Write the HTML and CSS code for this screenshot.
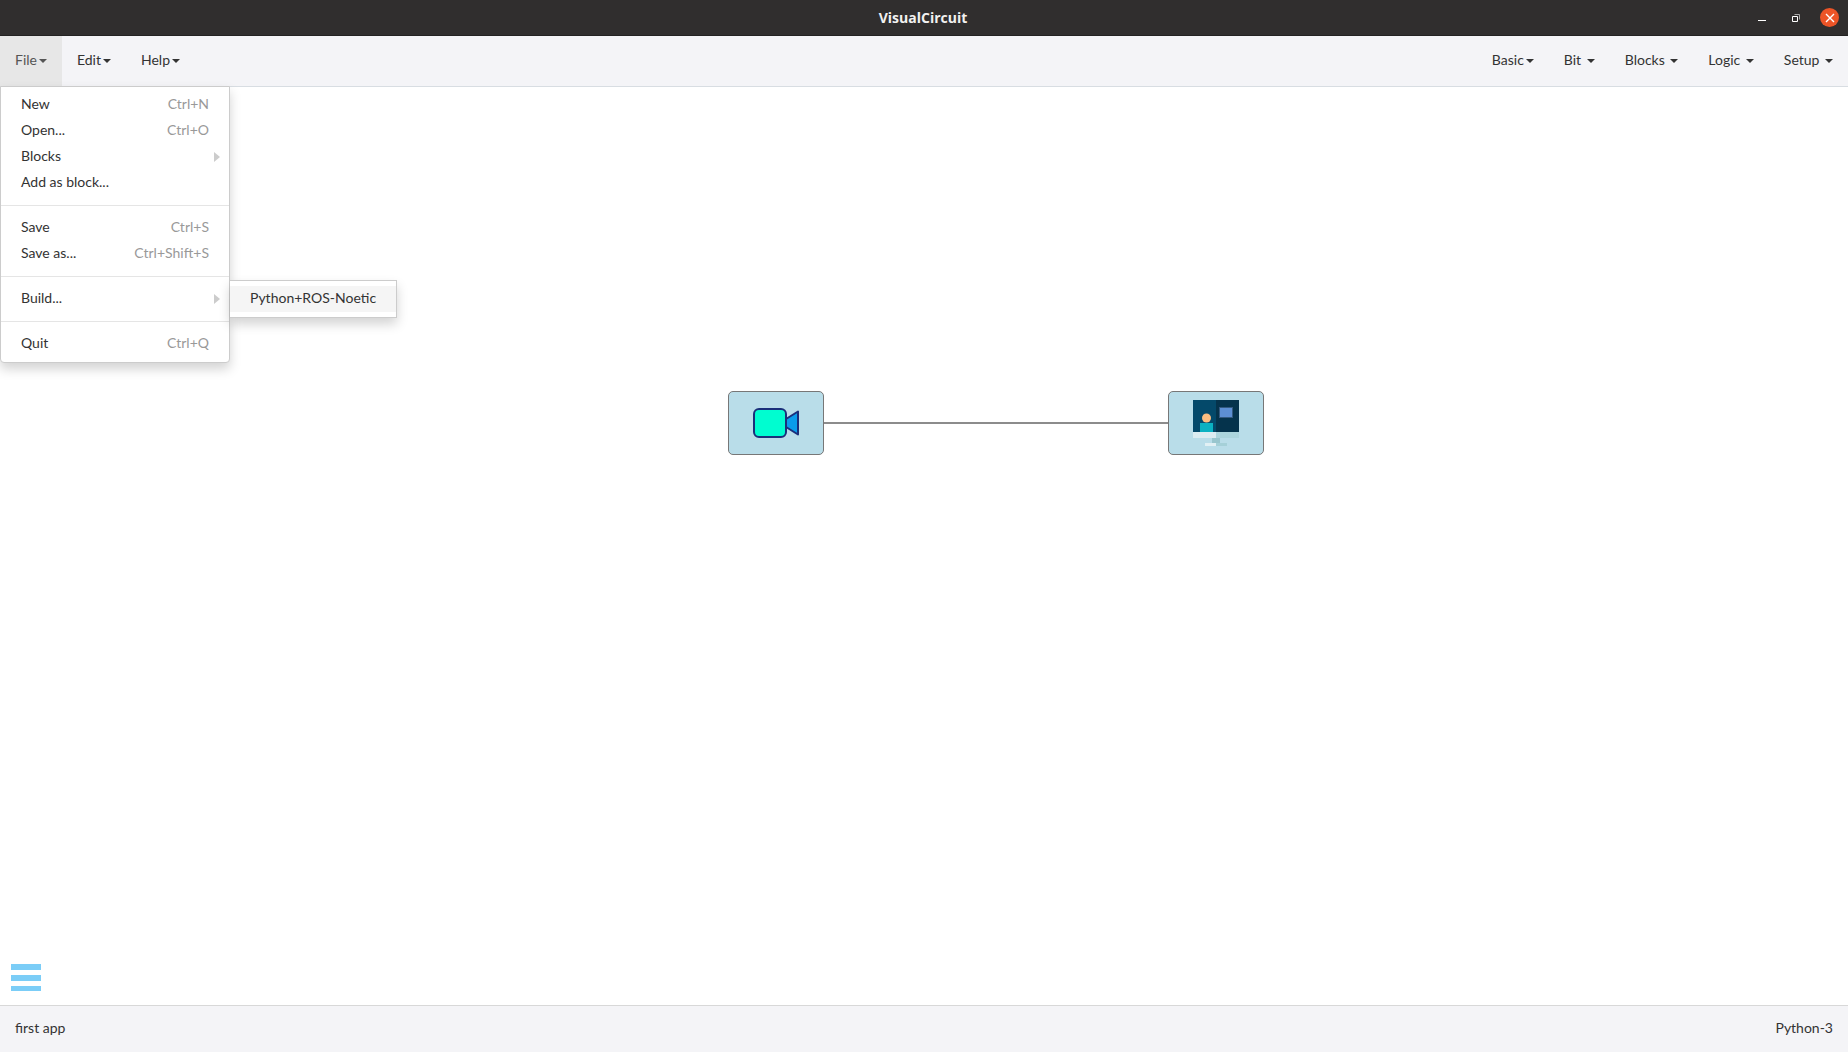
FILE: index.html

```html
<!DOCTYPE html>
<html lang="en">
<head>
  <meta charset="UTF-8" />
  <title>VisualCircuit</title>
  <link rel="stylesheet" href="styles.css">
</head>
<body>
  <header class="titlebar">
    <span class="app-title">VisualCircuit</span>
    <div class="win-buttons">
      <svg class="win-icon" width="10" height="10" viewBox="0 0 10 10"><path d="M1 7.500h8" stroke="#fff" stroke-width="1"/></svg>
      <svg class="win-icon" width="10" height="10" viewBox="0 0 10 10"><path d="M1.500 3.500h5v5h-5z" fill="none" stroke="#fff"/><path d="M3.500 1.500h5v5" fill="none" stroke="#aaa"/></svg>
      <span class="win-close">
        <svg width="10" height="10" viewBox="0 0 10 10"><path d="M1 1l8 8M9 1l-8 8" stroke="#fff" stroke-width="1.400"/></svg>
      </span>
    </div>
  </header>

  <nav class="menubar">
    <div class="menu-left">
      <a class="menu-btn active">File<span class="caret"></span></a>
      <a class="menu-btn">Edit<span class="caret"></span></a>
      <a class="menu-btn">Help<span class="caret"></span></a>
    </div>
    <div class="menu-right">
      <a class="menu-btn">Basic<span class="caret"></span></a>
      <a class="menu-btn">Bit <span class="caret"></span></a>
      <a class="menu-btn">Blocks <span class="caret"></span></a>
      <a class="menu-btn">Logic <span class="caret"></span></a>
      <a class="menu-btn">Setup <span class="caret"></span></a>
    </div>
  </nav>

  <ul class="dropdown">
    <li class="item"><span>New</span><span class="keys">Ctrl+N</span></li>
    <li class="item"><span>Open...</span><span class="keys">Ctrl+O</span></li>
    <li class="item sub"><span>Blocks</span></li>
    <li class="item"><span>Add as block...</span></li>
    <li class="divider"></li>
    <li class="item"><span>Save</span><span class="keys">Ctrl+S</span></li>
    <li class="item"><span>Save as...</span><span class="keys">Ctrl+Shift+S</span></li>
    <li class="divider"></li>
    <li class="item sub"><span>Build...</span></li>
    <li class="divider"></li>
    <li class="item"><span>Quit</span><span class="keys">Ctrl+Q</span></li>
  </ul>
  <ul class="submenu">
    <li class="item hover"><span>Python+ROS-Noetic</span></li>
  </ul>

  <main class="canvas">
    <div class="wire"></div>
    <div class="node node-camera">
      <svg width="46" height="30" viewBox="0 0 46 30">
        <path d="M33 11L45 3.500v23L33 19z" fill="#0a9ceb" stroke="#1b2f7a" stroke-width="2" stroke-linejoin="round"/>
        <rect x="1" y="1" width="32" height="28" rx="5" fill="#00fdd0" stroke="#1b2f7a" stroke-width="2"/>
      </svg>
    </div>
    <div class="node node-screen">
      <svg width="46" height="46" viewBox="0 0 46 46">
        <rect x="0" y="0" width="23" height="32" fill="#04496a"/>
        <rect x="23" y="0" width="23" height="32" fill="#05334c"/>
        <rect x="26.500" y="7.500" width="13" height="10" fill="#5d8fd3" stroke="#33597f"/>
        <circle cx="13.500" cy="18" r="4.500" fill="#fbbd80"/>
        <rect x="7" y="23" width="13" height="9" fill="#0bb1c1"/>
        <rect x="0" y="32" width="23" height="6" fill="#dbecf1"/>
        <rect x="23" y="32" width="23" height="6" fill="#acd5dd"/>
        <rect x="19" y="38" width="8" height="5" fill="#99c6ce"/>
        <rect x="12" y="43" width="11" height="3" fill="#e2f0f4"/>
        <rect x="23" y="43" width="11" height="3" fill="#a5d0d8"/>
      </svg>
    </div>
    <div class="burger">
      <span></span><span></span><span></span>
    </div>
  </main>

  <footer class="statusbar">
    <span>first app</span>
    <span>Python-3</span>
  </footer>
</body>
</html>
```

FILE: styles.css

```css
* { box-sizing: border-box; }
html, body { height: 100%; }
body {
  margin: 0;
  display: flex;
  flex-direction: column;
  overflow: hidden;
  font-family: Lato, sans-serif;
  font-size: 14px;
  color: #333;
  background: #fff;
}

.titlebar {
  height: 36px;
  flex: none;
  position: relative;
  display: flex;
  align-items: center;
  justify-content: center;
  background: #302e2e;
  border-bottom: 1px solid #232222;
}
.app-title {
  font-family: "Open Sans", sans-serif;
  font-weight: 700;
  font-size: 14px;
  color: #f2f1f0;
  margin-right: 2px;
}
.win-buttons {
  position: absolute;
  right: 9px;
  top: 8px;
  display: flex;
  align-items: center;
  gap: 24px;
}
.win-close {
  width: 19px;
  height: 19px;
  margin-left: -5px;
  border-radius: 50%;
  background: #ec5427;
  display: flex;
  align-items: center;
  justify-content: center;
}

.menubar {
  height: 51px;
  flex: none;
  display: flex;
  justify-content: space-between;
  background: #f4f4f7;
  border-bottom: 1px solid #d8dde2;
}
.menu-left, .menu-right { display: flex; }
.menu-btn {
  display: flex;
  align-items: center;
  padding: 0 15px 3px;
  white-space: pre;
  color: #333;
}
.menu-btn.active {
  background: #e7e7e7;
  color: #555;
}
.caret {
  display: inline-block;
  width: 0;
  height: 0;
  margin: 2px 0 0 2px;
  border-top: 4px solid #333;
  border-left: 4px solid transparent;
  border-right: 4px solid transparent;
}
.menu-btn.active .caret { border-top-color: #555; }

.dropdown, .submenu {
  position: absolute;
  margin: 0;
  list-style: none;
  background: #fff;
  border: 1px solid #ccc;
  box-shadow: 0 6px 12px rgba(0,0,0,0.175);
  z-index: 10;
}
.dropdown {
  left: 0;
  top: 86px;
  width: 230px;
  padding: 5px 0;
  border-radius: 0 0 4px 4px;
}
.submenu {
  left: 230px;
  top: 280px;
  width: 167px;
  padding: 5px 0;
  border-left: none;
}
.item {
  height: 26px;
  padding: 0 20px 4px;
  display: flex;
  align-items: center;
  justify-content: space-between;
  position: relative;
  white-space: nowrap;
}
.item.hover { background: #f5f5f5; padding: 0 0 3px 20px; }
.keys { color: #999; }
.sub::after {
  content: "";
  position: absolute;
  right: 9px;
  top: 8px;
  border-left: 6px solid #ccc;
  border-top: 5.500px solid transparent;
  border-bottom: 5.500px solid transparent;
}
.divider {
  height: 1px;
  margin: 9px 0;
  background: #e5e5e5;
}

.canvas {
  flex: 1;
  position: relative;
}
.wire {
  position: absolute;
  left: 824px;
  top: 335px;
  width: 344px;
  height: 2px;
  background: #8c8c8c;
}
.node {
  position: absolute;
  top: 304px;
  width: 96px;
  height: 64px;
  background: #b9dde9;
  border: 1px solid #777;
  border-radius: 5px;
  display: flex;
  align-items: center;
  justify-content: center;
}
.node-camera { left: 728px; }
.node-screen { left: 1168px; }
.burger {
  position: absolute;
  left: 11px;
  bottom: 14px;
  width: 30px;
  display: flex;
  flex-direction: column;
  gap: 5px;
}
.burger span {
  height: 6px;
  background: #7bcdf7;
}
.burger span:last-child { height: 5px; }

.statusbar {
  height: 47px;
  flex: none;
  display: flex;
  align-items: center;
  justify-content: space-between;
  padding: 0 15px 3px;
  background: #f4f4f7;
  border-top: 1px solid #d8d8d8;
}
```
